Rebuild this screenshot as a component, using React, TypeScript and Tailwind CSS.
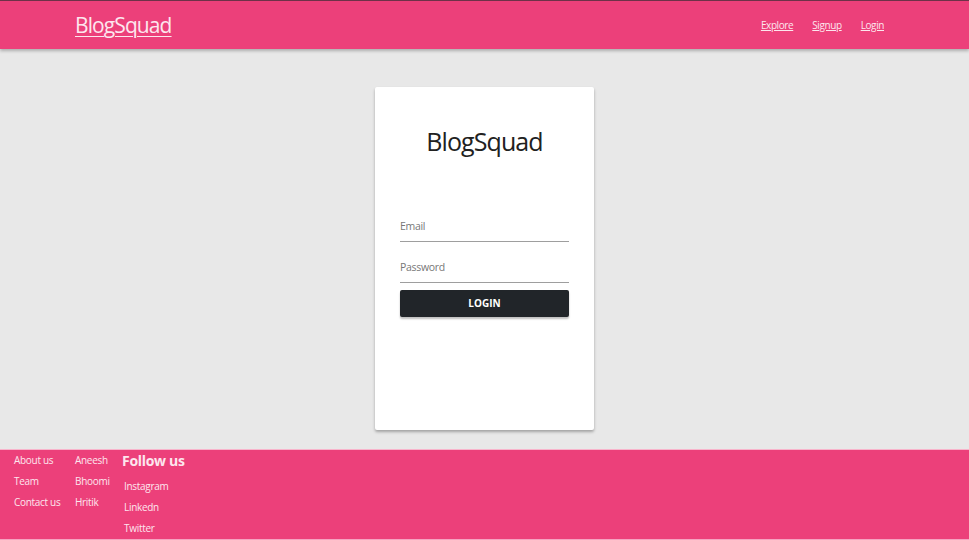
import React from "react";

export default function App() {
  const font = { fontFamily: '"Open Sans", "Noto Sans", "Liberation Sans", sans-serif' };
  return (
    <div className="w-[969px] h-[540px] bg-[#e8e8e8] flex flex-col overflow-hidden" style={font}>
      <nav className="h-[49px] shrink-0 bg-[#ec407a] border-t border-[#6e3148] shadow-[0_2px_3px_rgba(0,0,0,0.25)] flex items-center relative z-10">
        <a className="ml-[75px] text-[21px] tracking-[-0.9px] text-[#fde6ee] underline underline-offset-[3px] decoration-1 leading-none mt-[1px]">BlogSquad</a>
        <div className="ml-auto mr-[85px] flex gap-[19px] text-[10px] text-[#fde6ee] tracking-[-0.4px]">
          <a className="underline">Explore</a>
          <a className="underline">Signup</a>
          <a className="underline">Login</a>
        </div>
      </nav>
      <main className="flex-1 flex justify-center pt-[38px]">
        <div className="w-[219px] h-[343px] bg-white rounded-[2px] shadow-[0_2px_3px_rgba(0,0,0,0.3)] flex flex-col items-center px-[25px]">
          <h1 className="mt-[42px] text-[25px] font-medium text-[#212121] tracking-[-0.9px] leading-none">BlogSquad</h1>
          <div className="w-full mt-[65px] border-b border-[#9e9e9e] pb-[6px] text-[10.5px] text-[#777] tracking-[-0.3px]">Email</div>
          <div className="w-full mt-[18px] border-b border-[#9e9e9e] pb-[6px] text-[10.5px] text-[#777] tracking-[-0.3px]">Password</div>
          <button className="w-full mt-[7px] h-[27px] bg-[#212529] rounded-[2px] text-white text-[10px] font-bold shadow-[0_2px_2px_rgba(0,0,0,0.25)]">LOGIN</button>
        </div>
      </main>
      <footer className="h-[91px] shrink-0 bg-[#ec407a] border-t border-[#f8b4cb] border-b border-b-[#f6a3c0] flex text-[10px] text-[#fde6ee] tracking-[-0.3px]">
        <div className="ml-[14px] w-[61px] mt-[3px] flex flex-col gap-[6px] leading-[15px]">
          <span>About us</span>
          <span>Team</span>
          <span>Contact us</span>
        </div>
        <div className="w-[47px] mt-[3px] flex flex-col gap-[6px] leading-[15px]">
          <span>Aneesh</span>
          <span>Bhoomi</span>
          <span>Hritik</span>
        </div>
        <div className="mt-[1px] flex flex-col">
          <span className="text-[14px] font-bold leading-[20px]">Follow us</span>
          <div className="ml-[2px] mt-[8px] flex flex-col gap-[6px] leading-[15px]">
            <span>Instagram</span>
            <span>Linkedn</span>
            <span>Twitter</span>
          </div>
        </div>
      </footer>
    </div>
  );
}
